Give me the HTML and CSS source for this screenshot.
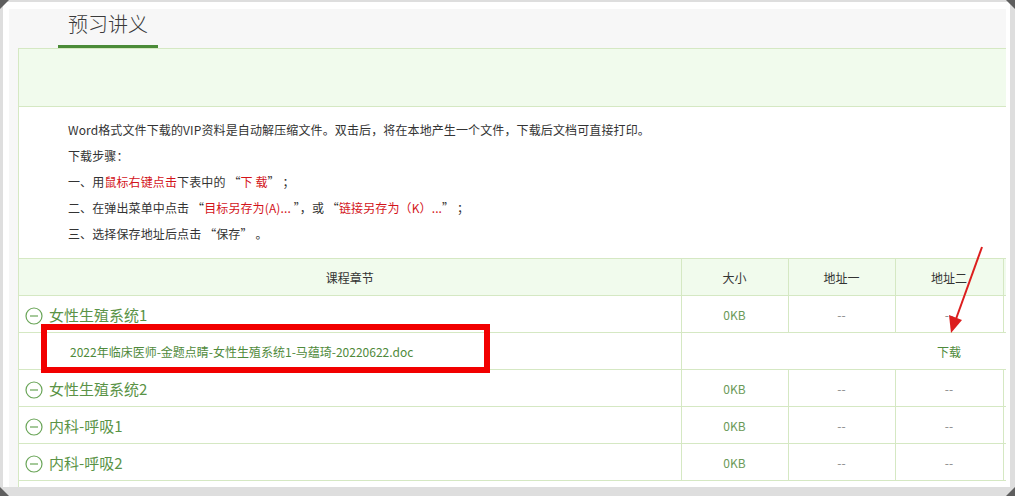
FILE: index.html
```html
<!DOCTYPE html>
<html lang="zh-CN">
<head>
    <meta charset="UTF-8">
    <meta name="viewport" content="width=device-width, initial-scale=1.0">
    <title>预习讲义</title>
    <link rel="stylesheet" href="styles.css">
</head>
<body>
<div class="frame">
  <div class="sheet">
    <div class="panel">
      <div class="tabs"><span class="tab">预习讲义</span></div>

      <div class="body">
        <div class="banner"></div>

        <div class="notice">
          <p>Word格式文件下载的VIP资料是自动解压缩文件。双击后，将在本地产生一个文件，下载后文档可直接打印。</p>
          <p>下载步骤：</p>
          <p>一、用<span class="red">鼠标右键点击</span>下表中的 “<span class="red">下 载</span>” ；</p>
          <p>二、在弹出菜单中点击 “<span class="red">目标另存为(A)...</span> ”，或 “<span class="red">链接另存为（K）...</span>” ；</p>
          <p>三、选择保存地址后点击 “保存” 。</p>
        </div>

        <div class="table-wrap">
          <table class="files">
            <colgroup>
              <col class="c-name"><col class="c-size"><col class="c-addr"><col class="c-addr2"><col class="c-more">
            </colgroup>
            <tr class="head">
              <td>课程章节</td><td>大小</td><td>地址一</td><td>地址二</td><td></td>
            </tr>
            <tr>
              <td class="group"><svg class="minus" viewBox="0 0 18 18"><circle cx="9" cy="9" r="8"/><line x1="5" y1="9" x2="13" y2="9"/></svg>女性生殖系统1</td>
              <td class="size">0KB</td><td class="none">--</td><td class="none">--</td><td></td>
            </tr>
            <tr class="doc">
              <td class="doc-name">2022年临床医师-金题点睛-女性生殖系统1-马蕴琦-20220622.doc</td>
              <td colspan="2"></td><td class="link">下载</td><td></td>
            </tr>
            <tr>
              <td class="group"><svg class="minus" viewBox="0 0 18 18"><circle cx="9" cy="9" r="8"/><line x1="5" y1="9" x2="13" y2="9"/></svg>女性生殖系统2</td>
              <td class="size">0KB</td><td class="none">--</td><td class="none">--</td><td></td>
            </tr>
            <tr>
              <td class="group"><svg class="minus" viewBox="0 0 18 18"><circle cx="9" cy="9" r="8"/><line x1="5" y1="9" x2="13" y2="9"/></svg>内科-呼吸1</td>
              <td class="size">0KB</td><td class="none">--</td><td class="none">--</td><td></td>
            </tr>
            <tr>
              <td class="group"><svg class="minus" viewBox="0 0 18 18"><circle cx="9" cy="9" r="8"/><line x1="5" y1="9" x2="13" y2="9"/></svg>内科-呼吸2</td>
              <td class="size">0KB</td><td class="none">--</td><td class="none">--</td><td></td>
            </tr>
          </table>
        </div>
      </div>
    </div>
  </div>

  <!-- annotations drawn over the screenshot -->
  <div class="mark-box"></div>
  <svg class="mark-arrow" viewBox="0 0 1015 496">
    <line x1="982" y1="247" x2="956" y2="319"/>
    <polygon points="951,333 962,320 949,315"/>
  </svg>

  <i class="corner tl"></i>
  <i class="corner tr"></i>
  <i class="corner bl"></i>
  <i class="corner br"></i>
</div>
</body>
</html>
```

FILE: styles.css
```css
*{
    margin: 0;
    padding: 0;
    box-sizing: border-box;
}
body{
    font-family: "Noto Sans CJK SC", "Liberation Sans", sans-serif;
    background-color: #ddd;
}
.frame{
    position: relative;
    width: 1015px;
    height: 496px;
    padding: 2px 5px 9px 3px;
    background-color: #dedede;
    overflow: hidden;
}
.sheet{
    height: 100%;
    background-color: #fff;
    padding: 7px 4px 0 6px;
}
.panel{
    height: 100%;
    background-color: #f7f7f7;
    padding-left: 9px;
    display: flex;
    flex-direction: column;
}
.tabs{
    height: 39px;
    padding-left: 40px;
}
.tab{
    display: inline-block;
    width: 100px;
    height: 39px;
    line-height: 30px;
    text-align: center;
    font-size: 20px;
    font-weight: 300;
    color: #3a3a3a;
    border-bottom: 3px solid #4b8b38;
}
.body{
    flex: 1;
    background-color: #fff;
    border-left: 1px solid #d5e8c3;
}
.banner{
    height: 59px;
    background-color: #f1fbed;
    border-top: 1px solid #d5e8c3;
    border-bottom: 1px solid #d5e8c3;
}
.notice{
    padding: 10px 0 11px 49px;
    font-size: 12px;
    line-height: 26px;
    letter-spacing: 0.12px;
    color: #333;
}
.red{
    color: #d3141a;
}
.table-wrap{
    overflow: hidden;
}
.files{
    width: 1100px;
    table-layout: fixed;
    border-collapse: collapse;
    font-size: 12px;
    color: #333;
}
.c-name{ width: 662px; }
.c-size{ width: 107px; }
.c-addr{ width: 107px; }
.c-addr2{ width: 108px; }
.c-more{ width: 116px; }
.files td{
    height: 37px;
    padding: 0;
    border: 1px solid #d5e8c3;
    text-align: center;
    white-space: nowrap;
}
.files tr td:first-child{
    border-left: none;
}
.files .head td{
    background-color: #f1fbed;
}
.files .group{
    text-align: left;
    padding-left: 6px;
    font-size: 15px;
    color: #5a9346;
}
.minus{
    width: 18px;
    height: 18px;
    vertical-align: -4px;
    margin-right: 6px;
    fill: none;
    stroke: #6aa558;
    stroke-width: 1.2;
}
.size{
    color: #6b9a58;
}
.none{
    color: #888;
}
.files .doc td{
    border-left: none;
    border-right: none;
}
.files .doc .doc-name{
    text-align: left;
    padding-left: 51px;
    color: #4f8a3b;
    border-right: 1px solid #d5e8c3;
}
.link{
    color: #4f8a3b;
}

.mark-box{
    position: absolute;
    left: 41px;
    top: 324px;
    width: 449px;
    height: 49px;
    border: 6px solid #f20000;
}
.mark-arrow{
    position: absolute;
    left: 0;
    top: 0;
    width: 1015px;
    height: 496px;
    pointer-events: none;
}
.mark-arrow line{
    stroke: #dc1e1e;
    stroke-width: 2;
}
.mark-arrow polygon{
    fill: #dc1e1e;
}

.corner{
    position: absolute;
    width: 0;
    height: 0;
}
.tl{
    top: 0;
    left: 0;
    border-top: 9px solid #5e5e5e;
    border-right: 9px solid transparent;
}
.tr{
    top: 0;
    right: 0;
    border-top: 9px solid #5e5e5e;
    border-left: 9px solid transparent;
}
.bl{
    bottom: 0;
    left: 0;
    border-bottom: 9px solid #5e5e5e;
    border-right: 9px solid transparent;
}
.br{
    bottom: 0;
    right: 0;
    border-bottom: 9px solid #5e5e5e;
    border-left: 9px solid transparent;
}
```
